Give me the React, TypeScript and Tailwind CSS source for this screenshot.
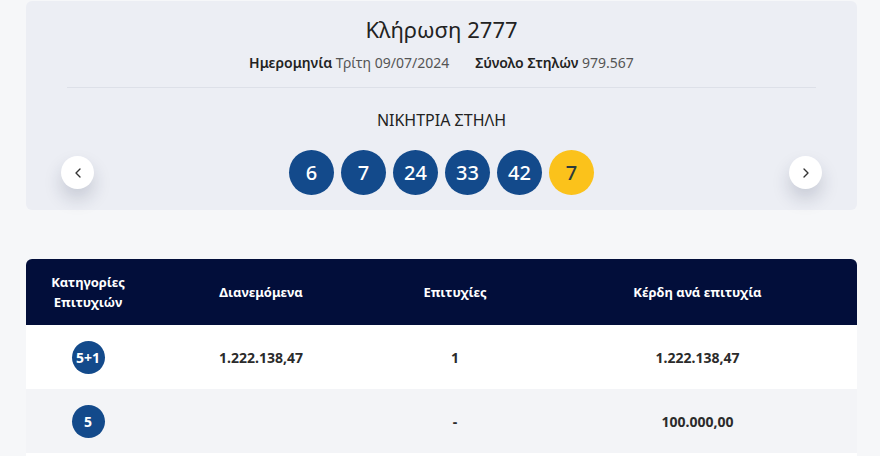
import { ChevronLeft, ChevronRight } from 'lucide-react';

const NUMBERS = [6, 7, 24, 33, 42];
const JOKER = 7;

const ROWS = [
  { cat: '5+1', amount: '1.222.138,47', wins: '1', prize: '1.222.138,47' },
  { cat: '5', amount: '', wins: '-', prize: '100.000,00' },
];

function ArrowButton({ dir }: { dir: 'left' | 'right' }) {
  const Icon = dir === 'left' ? ChevronLeft : ChevronRight;
  return (
    <button className="w-[33px] h-[33px] rounded-full bg-white flex items-center justify-center shadow-[0_10px_18px_rgba(30,40,70,0.18)]">
      <Icon size={16} strokeWidth={2} className="text-[#333]" />
    </button>
  );
}

export default function App() {
  return (
    <div
      className="min-h-screen bg-[#f6f7f9] pl-[26px] pr-[23px] pt-px"
      style={{ fontFamily: '"Noto Sans", "Open Sans", sans-serif' }}
    >
      {/* Draw summary */}
      <div className="h-[209px] rounded-md bg-[#eceef4] flex flex-col items-center pt-[12px]">
        <h1 className="text-[22px] leading-[32px] text-[#222]">Κλήρωση 2777</h1>
        <div className="mt-[8px] flex gap-[26px] text-[14px] leading-[20px] text-[#555]">
          <span>
            <b className="font-semibold text-[#222]">Ημερομηνία</b> Τρίτη 09/07/2024
          </span>
          <span>
            <b className="font-semibold text-[#222]">Σύνολο Στηλών</b> 979.567
          </span>
        </div>
        <div className="mt-[14px] self-stretch mx-[41px] h-px bg-[#dde0e8]" />
        <div className="mt-[20px] text-[16px] leading-[24px] text-[#222]">ΝΙΚΗΤΡΙΑ ΣΤΗΛΗ</div>
        <div className="mt-[18px] self-stretch px-[35px] flex items-center justify-between">
          <ArrowButton dir="left" />
          <div className="flex gap-[7px]">
            {NUMBERS.map((n, i) => (
              <div
                key={i}
                className="w-[45px] h-[45px] rounded-full bg-[#134a8b] text-white text-[20px] font-medium flex items-center justify-center"
              >
                {n}
              </div>
            ))}
            <div className="w-[45px] h-[45px] rounded-full bg-[#fbc21b] text-[#2c3a3a] text-[20px] font-medium flex items-center justify-center">
              {JOKER}
            </div>
          </div>
          <ArrowButton dir="right" />
        </div>
      </div>

      {/* Prize table */}
      <div className="mt-[49px] rounded-t-md overflow-hidden">
        <div className="h-[66px] bg-[#020e3a] text-white text-[13px] leading-[20px] font-bold grid grid-cols-[124px_222px_166px_1fr] items-center text-center">
          <div>
            Κατηγορίες
            <br />
            Επιτυχιών
          </div>
          <div>Διανεμόμενα</div>
          <div>Επιτυχίες</div>
          <div>Κέρδη ανά επιτυχία</div>
        </div>
        {ROWS.map((r, i) => (
          <div
            key={r.cat}
            className={`h-[64px] grid grid-cols-[124px_222px_166px_1fr] items-center text-center text-[14px] font-bold text-[#2b2b2b] ${
              i % 2 === 0 ? 'bg-white' : 'bg-[#f3f4f7]'
            }`}
          >
            <div className="flex justify-center">
              <span className="w-[33px] h-[33px] rounded-full bg-[#134a8b] text-white text-[14px] flex items-center justify-center">
                {r.cat}
              </span>
            </div>
            <div>{r.amount}</div>
            <div>{r.wins}</div>
            <div>{r.prize}</div>
          </div>
        ))}
        <div className="h-[20px] bg-white" />
      </div>
    </div>
  );
}
